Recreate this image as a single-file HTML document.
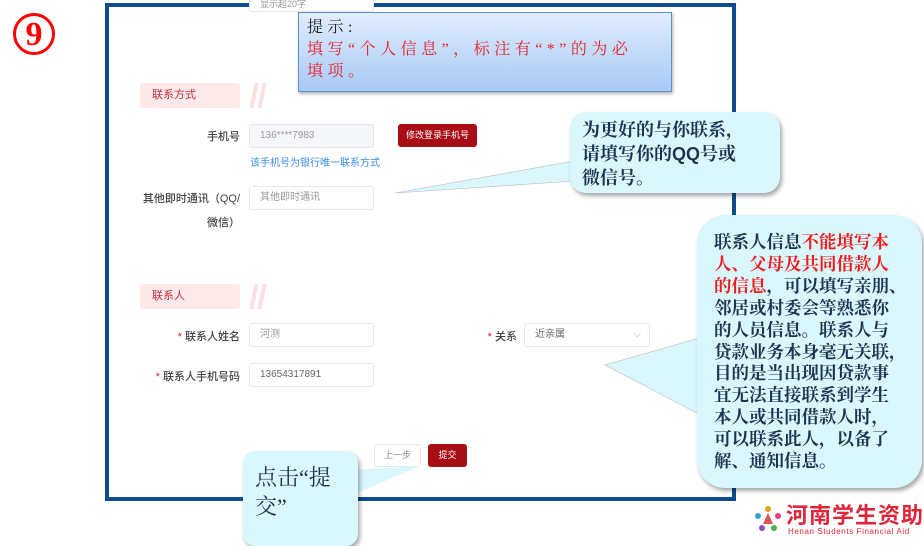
<!DOCTYPE html>
<html><head><meta charset="utf-8"><style>
*{margin:0;padding:0;box-sizing:border-box}
body{width:924px;height:536px;background:#fff;position:relative;overflow:hidden;font-family:"Liberation Sans","Noto Sans CJK SC",sans-serif}
.a{position:absolute}
.frame{left:105px;top:3px;width:631px;height:498px;border:4px solid #0d4c8c;background:#fff}
.lbl{font-size:11px;color:#444;text-align:right;font-weight:500;white-space:nowrap}
.inp{border:1px solid #e4e7ed;border-radius:3px;background:#fff;font-size:10px;color:#999;padding-left:10px;line-height:22px;height:24px}
.hdr{background:#fde8ea;color:#c0303c;font-size:11px;padding-left:12px;line-height:25px;height:25px;width:100px;border-radius:3px}
.sl{width:4px;height:25px;background:#fde0e4;transform:skewX(-12deg)}
.star{color:#e02020}
.cb{background:#d9f7fc;border-radius:16px;box-shadow:2px 3px 4px rgba(0,0,0,.35);color:#1f3350;font-family:"Liberation Serif","Noto Serif CJK SC",serif;white-space:nowrap}
.red{color:#f01c1c}
</style></head><body>
<div class="a" style="left:13px;top:13px;width:42px;height:42px;border:3px solid #f00;border-radius:50%;color:#f00;font:bold 34px/37px 'Liberation Serif',serif;text-align:center">9</div>
<div class="a frame"></div>
<div class="a inp" style="left:249px;top:-10px;width:125px;height:22px;font-size:9px;line-height:26px">显示超20字</div>

<div class="a hdr" style="left:140px;top:83px">联系方式</div>
<div class="a sl" style="left:252px;top:83px"></div><div class="a sl" style="left:260px;top:83px"></div>
<div class="a lbl" style="left:150px;top:128px;width:90px">手机号</div>
<div class="a inp" style="left:249px;top:124px;width:125px;background:#f5f7fa">136****7983</div>
<div class="a" style="left:398px;top:124px;width:79px;height:23px;background:#a80c14;border-radius:3px;color:#fff;font-size:9px;text-align:center;line-height:23px">修改登录手机号</div>
<div class="a" style="left:250px;top:154px;font-size:10px;color:#3a8ee6">该手机号为银行唯一联系方式</div>
<div class="a lbl" style="left:140px;top:190px;width:100px">其他即时通讯（QQ/</div>
<div class="a lbl" style="left:140px;top:214px;width:100px">微信）</div>
<div class="a inp" style="left:249px;top:186px;width:125px">其他即时通讯</div>

<div class="a hdr" style="left:140px;top:284px">联系人</div>
<div class="a sl" style="left:252px;top:284px"></div><div class="a sl" style="left:260px;top:284px"></div>
<div class="a lbl" style="left:140px;top:328px;width:100px"><span class="star">*</span> 联系人姓名</div>
<div class="a inp" style="left:249px;top:323px;width:125px">河测</div>
<div class="a lbl" style="left:470px;top:328px;width:47px"><span class="star">*</span> 关系</div>
<div class="a inp" style="left:524px;top:323px;width:126px;color:#666">近亲属<span style="position:absolute;right:8px;color:#aaa">⌵</span></div>
<div class="a lbl" style="left:140px;top:368px;width:100px"><span class="star">*</span> 联系人手机号码</div>
<div class="a inp" style="left:249px;top:363px;width:125px;color:#666">13654317891</div>
<div class="a" style="left:374px;top:444px;width:47px;height:23px;border:1px solid #e4e7ed;border-radius:3px;font-size:9px;color:#888;text-align:center;line-height:21px">上一步</div>
<div class="a" style="left:428px;top:444px;width:39px;height:23px;background:#a80c14;border-radius:3px;font-size:9px;color:#fff;text-align:center;line-height:23px">提交</div>

<!-- top hint -->
<div class="a" style="left:298px;top:12px;width:374px;height:80px;border:1px solid #5b8fd0;background:linear-gradient(#e0edfd,#a9c9f6);box-shadow:1px 2px 3px rgba(0,0,0,.3);padding:4px 8px;font:16px/22px 'Liberation Serif','Noto Serif CJK SC',serif;letter-spacing:4.5px;color:#222;white-space:nowrap">提示:<br><span style="color:#e8202a">填写“个人信息”，标注有“*”的为必<br>填项。</span></div>

<svg class="a" style="left:0;top:0" width="924" height="536">
<polygon points="580,160 590,180 395,193" fill="#d9f7fc" stroke="#bbb" stroke-width="0.6"/>
<polygon points="710,335 710,420 605,365" fill="#d9f7fc" stroke="#bbb" stroke-width="0.6"/>
<polygon points="330,478 350,470 420,466 350,496" fill="#d9f7fc"/>
</svg>
<div class="a cb" style="left:570px;top:112px;width:210px;height:81px;padding:6px 0 0 12px;font-size:18px;line-height:24px;font-weight:bold">为更好的与你联系，<br>请填写你的<span style="font-family:'Liberation Sans',sans-serif">QQ</span>号或<br>微信号。</div>
<div class="a cb" style="left:697px;top:215px;width:225px;height:273px;border-radius:28px;padding:17px 0 0 17px;font-size:17.5px;line-height:21.9px;font-weight:bold">联系人信息<span class="red">不能填写本</span><br><span class="red">人、父母及共同借款人</span><br><span class="red">的信息</span>，可以填写亲朋、<br>邻居或村委会等熟悉你<br>的人员信息。联系人与<br>贷款业务本身毫无关联，<br>目的是当出现因贷款事<br>宜无法直接联系到学生<br>本人或共同借款人时，<br>可以联系此人，以备了<br>解、通知信息。</div>
<div class="a cb" style="left:243px;top:451px;width:115px;height:95px;border-radius:12px;padding:12px 0 0 12px;font-size:22px;line-height:29px">点击“提<br>交”</div>

<svg class="a" style="left:754px;top:504px" width="28" height="28" viewBox="0 0 28 28">
<circle cx="14" cy="5" r="3" fill="#e8a020"/><circle cx="4" cy="12" r="3" fill="#3aa0d8"/><circle cx="24" cy="12" r="3" fill="#e84080"/><circle cx="8" cy="24" r="3" fill="#8a50c0"/><circle cx="20" cy="24" r="3" fill="#50b050"/>
<path d="M14 9 L9 20 L19 20Z" fill="#e05050"/></svg>
<div class="a" style="left:786px;top:502px;font:bold 22px/24px 'Noto Sans CJK SC',sans-serif;color:#e0243a;letter-spacing:1px">河南学生资助</div>
<div class="a" style="left:788px;top:527px;font-size:8px;color:#e0243a;letter-spacing:0.6px;line-height:9px">Henan Students Financial Aid</div>
</body></html>
